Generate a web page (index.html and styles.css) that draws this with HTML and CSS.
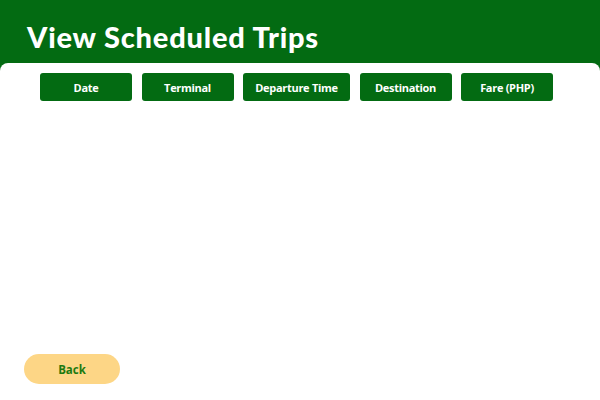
FILE: index.html
```html
<!DOCTYPE html>
<html>
<head>
<meta charset="utf-8">
<link rel="stylesheet" href="styles.css">
</head>
<body>
<div class="page">
  <header class="header">
    <h1 class="title">View Scheduled Trips</h1>
  </header>
  <main class="panel">
    <div class="columns">
      <div class="col">Date</div>
      <div class="col">Terminal</div>
      <div class="col wide">Departure Time</div>
      <div class="col">Destination</div>
      <div class="col">Fare (PHP)</div>
    </div>
    <div class="spacer"></div>
    <div class="footer">
      <button class="back">Back</button>
    </div>
  </main>
</div>
</body>
</html>
```
FILE: styles.css
```css
html, body {
  margin: 0;
  padding: 0;
  width: 600px;
  height: 400px;
  overflow: hidden;
  background: #036b12;
}
.page {
  display: flex;
  flex-direction: column;
  height: 400px;
}
.header {
  height: 63px;
  display: flex;
  align-items: center;
  padding-left: 27px;
  box-sizing: border-box;
}
.title {
  margin: 0;
  color: #fff;
  font-family: Lato, "Open Sans", sans-serif;
  font-weight: 900;
  font-size: 29px;
  letter-spacing: 0.8px;
  padding-top: 9px;
}
.panel {
  flex: 1;
  background: #fff;
  border-radius: 8px 8px 0 0;
  display: flex;
  flex-direction: column;
}
.columns {
  display: flex;
  gap: 9.5px;
  padding: 10px 0 0 40px;
}
.col {
  width: 92px;
  height: 28px;
  background: #036b12;
  border-radius: 3px;
  color: #fff;
  font-family: "Open Sans", sans-serif;
  font-weight: 700;
  font-size: 11px;
  letter-spacing: -0.3px;
  display: flex;
  align-items: center;
  justify-content: center;
}
.col.wide {
  width: 107px;
}
.spacer {
  flex: 1;
}
.footer {
  padding: 0 0 16px 24px;
}
.back {
  width: 96px;
  height: 30px;
  border: none;
  border-radius: 15px;
  background: #fdd686;
  color: #1d7a10;
  font-family: "Open Sans", sans-serif;
  font-weight: 700;
  font-size: 11.5px;
  padding: 0;
}
```
